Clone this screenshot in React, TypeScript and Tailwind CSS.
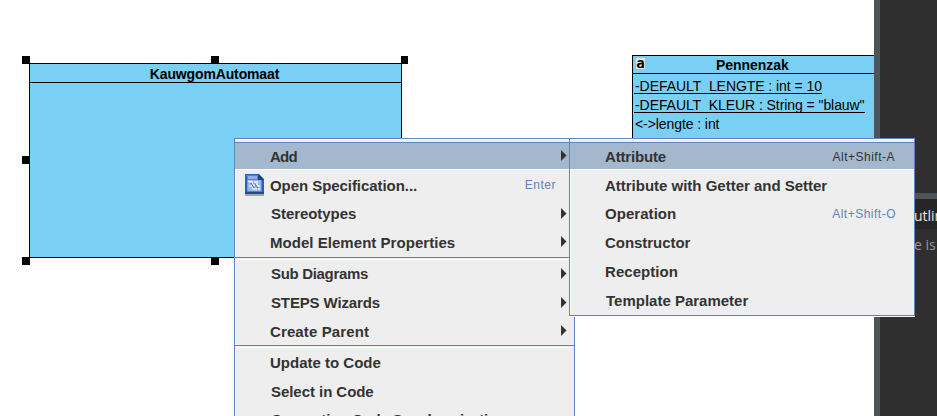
import type { ReactNode } from 'react';

type Item = { label: string; h: string; ls: string; pad?: string; shortcut?: string; arrow?: boolean; icon?: boolean };

const mainGroups: Item[][] = [
  [
    { label: 'Open Specification...', h: 'h-[30px]', ls: 'tracking-[-0.06px]', pad: 'pt-[2px]', shortcut: 'Enter', icon: true },
    { label: 'Stereotypes', h: 'h-[28px]', ls: 'tracking-[-0.06px]', pad: 'pl-px', arrow: true },
    { label: 'Model Element Properties', h: 'h-[29px]', ls: 'tracking-[0.04px]', pad: 'pt-[2px]', arrow: true },
  ],
  [
    { label: 'Sub Diagrams', h: 'h-[29px]', ls: 'tracking-[-0.32px]', pad: 'pl-px', arrow: true },
    { label: 'STEPS Wizards', h: 'h-[28px]', ls: 'tracking-[-0.14px]', pad: 'pl-px', arrow: true },
    { label: 'Create Parent', h: 'h-[28px]', ls: 'tracking-[0.12px]', pad: 'pt-[2px]', arrow: true },
  ],
  [
    { label: 'Update to Code', h: 'h-[29px]', ls: 'tracking-[0px]', pad: 'pt-[2px]' },
    { label: 'Select in Code', h: 'h-[29px]', ls: 'tracking-[-0.05px]', pad: 'pl-px pt-[2px]' },
    { label: 'Generation Code Synchronization', h: 'h-[29px]', ls: 'tracking-[-0.22px]', pad: 'pl-px' },
  ],
];

const subItems: Item[] = [
  { label: 'Attribute with Getter and Setter', h: 'h-[30px]', ls: 'tracking-[-0.01px]', pad: 'pt-[2px]' },
  { label: 'Operation', h: 'h-[28px]', ls: 'tracking-[0.05px]', shortcut: 'Alt+Shift-O' },
  { label: 'Constructor', h: 'h-[29px]', ls: 'tracking-[-0.05px]', pad: 'pt-[2px]' },
  { label: 'Reception', h: 'h-[29px]', ls: 'tracking-[0.05px]', pad: 'pt-[2px]' },
  { label: 'Template Parameter', h: 'h-[29px]', ls: 'tracking-[0px]', pad: 'pl-px pt-[2px]' },
];

function Arrow() {
  return (
    <svg className="mr-[7px] -mt-[2px] h-[11px] w-[6px] shrink-0" viewBox="0 0 6 11">
      <path d="M0 0 L5.5 5.5 L0 11 Z" fill="#333" />
    </svg>
  );
}

function SpecIcon() {
  return (
    <svg className="h-[22px] w-[19px]" viewBox="0 0 19 22">
      <rect x="0" y="20" width="19" height="2" fill="#a5a5a5" />
      <path d="M0 0H14L19 5V20H0Z" fill="#2b62b8" />
      <path d="M1 1H13V5H17V18H2V3Z" fill="#5584cc" />
      <path d="M13 0L19 6H13Z" fill="#173f91" />
      <rect x="3" y="2" width="9" height="3" fill="#8fb0e0" />
      <rect x="2.500" y="6" width="13.500" height="11" fill="#9ab6e2" />
      <path d="M3 7.500H7V11H10M12 7V12H15M4 12H8V15H12M9 8H11M13 15H15" stroke="#eaf1fb" strokeWidth="1.500" fill="none" />
      <path d="M6 9L9 14M10 10L13 14" stroke="#3a66b2" strokeWidth="1" fill="none" />
      <rect x="0" y="18" width="19" height="2" fill="#1c4b9f" />
    </svg>
  );
}

function Row({ item }: { item: Item }) {
  return (
    <div className={`flex items-center border-l border-white ${item.h}`}>
      <div className="flex w-[34px] shrink-0 pl-[9px]">{item.icon && <SpecIcon />}</div>
      <span className={`grow whitespace-nowrap ${item.ls} ${item.pad ?? ''}`}>{item.label}</span>
      {item.shortcut && (
        <span className="mr-[18px] text-[12px] font-normal tracking-[0.5px] text-[#6382bf]">{item.shortcut}</span>
      )}
      {item.arrow && <Arrow />}
    </div>
  );
}

function Selected({ label, tracking, children }: { label: string; tracking: string; children: ReactNode }) {
  return (
    <div className="flex h-[28px] items-center border-t border-b border-t-[#6382bf] border-b-white bg-[#a3b8cc]">
      <span className={`grow pl-[35px] pt-[2px] ${tracking}`}>{label}</span>
      {children}
    </div>
  );
}

function Handle({ pos }: { pos: string }) {
  return <div className={`absolute h-[8px] bg-black ${pos}`} />;
}

export default function App() {
  return (
    <div className="relative flex h-[416px] w-[937px] overflow-hidden bg-white font-['Liberation_Sans',sans-serif]">
      <main className="relative w-[874px] shrink-0 overflow-hidden bg-white text-black">
        <section className="absolute left-[29px] top-[63px] h-[195px] w-[373px] border border-black bg-[#7acff5]">
          <h2 className="flex h-[19px] items-center justify-center border-b border-black pr-[2px] pt-[3px] text-[14px] font-bold tracking-[-0.14px]">KauwgomAutomaat</h2>
          <Handle pos="-left-[8px] -top-[8px] w-[8px]" />
          <Handle pos="left-[181px] -top-[8px] w-[8px]" />
          <Handle pos="-right-[7px] -top-[8px] w-[7px]" />
          <Handle pos="-left-[8px] top-[92px] w-[8px]" />
          <Handle pos="-left-[8px] top-[193px] w-[8px]" />
          <Handle pos="left-[181px] top-[193px] w-[8px]" />
        </section>
        <section className="absolute left-[632px] top-[55px] h-[120px] w-[260px] border border-black bg-[#7acff5] text-[14px]">
          <header className="relative flex h-[18px] items-center border-b border-black pt-[2px] font-bold">
            <span className="absolute left-[3px] top-[2px] flex h-[11px] w-[9px] items-center justify-center bg-[#e8e4e0] pb-px font-['DejaVu_Sans_Mono',monospace] text-[14px] font-bold leading-none">a</span>
            <span className="pl-[83px] tracking-[-0.05px]">Pennenzak</span>
          </header>
          <div className="flex flex-col items-start pl-px pt-[3px]">
            <div className="mb-[2px] h-[17px] whitespace-nowrap border-b border-black pl-px leading-[19px] tracking-[-0.06px]">-DEFAULT_LENGTE : int = 10</div>
            <div className="mb-[2px] h-[17px] whitespace-nowrap border-b border-black pl-px leading-[19px] tracking-[-0.07px]">-DEFAULT_KLEUR : String = "blauw"</div>
            <div className="h-[17px] whitespace-nowrap pl-px leading-[19px] tracking-[-0.08px]">&lt;-&gt;lengte : int</div>
          </div>
        </section>
      </main>

      <aside className="flex grow bg-[#2f2f2f]">
        <div className="w-[6px] shrink-0 bg-[#4f5557]" />
        <div className="flex grow flex-col overflow-hidden pt-[193px] font-['Open_Sans',sans-serif]">
          <div className="h-[6px] shrink-0 bg-[#4f5557]" />
          <div className="flex h-[30px] shrink-0 items-center bg-[#262626] pl-[23px] pt-[3px] text-[14px] text-[#e6e6e6]">Outline</div>
          <div className="whitespace-nowrap pl-[4px] pt-[6px] text-[14px] leading-[20px] text-[#9a9a9a]">There is</div>
        </div>
      </aside>

      <nav className="absolute left-[234px] top-[138px] h-[290px] w-[341px] border border-[#6382bf] bg-[#eee] text-[15px] font-bold text-[#333]">
        <div className="h-[3px] border-t border-white" />
        <Selected label="Add" tracking="tracking-[-0.8px]"><Arrow /></Selected>
        {mainGroups.map((group, i) => (
          <div key={i}>
            {i > 0 && <div className="h-[3px] border-t border-b border-t-[#6382bf] border-b-white" />}
            {group.map((item) => <Row key={item.label} item={item} />)}
          </div>
        ))}
      </nav>

      <nav className="absolute left-[569px] top-[138px] h-[178px] w-[346px] border border-[#6382bf] bg-[#eee] text-[15px] font-bold text-[#333] shadow-[0_1px_0_#fff]">
        <div className="h-[3px] border-t border-white" />
        <Selected label="Attribute" tracking="tracking-[-0.16px]"><span className="mr-[19px] pt-px text-[12px] font-normal tracking-[0.5px]">Alt+Shift-A</span></Selected>
        {subItems.map((item) => <Row key={item.label} item={item} />)}
      </nav>
    </div>
  );
}
